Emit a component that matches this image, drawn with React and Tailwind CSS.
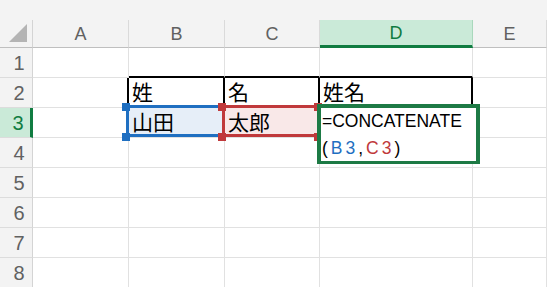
import React from 'react';

const fontStack = "font-['Liberation_Sans','Noto_Sans_CJK_JP',sans-serif]";

const COLS = ['A', 'B', 'C', 'D', 'E'];
const ROWS = [1, 2, 3, 4, 5, 6, 7, 8];

const colWidth = {
  A: 'w-[96px]',
  B: 'w-[96px]',
  C: 'w-[95px]',
  D: 'w-[153px]',
  E: 'flex-1',
};

const cellText = {
  B2: '姓',
  C2: '名',
  D2: '姓名',
  B3: '山田',
  C3: '太郎',
};

// bg + border for each cell; black table border around B2:D2 sits on the grid lines
const cellStyle = (id) => {
  switch (id) {
    case 'B1':
    case 'C1':
    case 'D1':
      return 'bg-white border-r border-r-[#e1e1e1] border-b-2 border-b-black';
    case 'A2':
      return 'bg-white border-r-2 border-r-black border-b border-b-[#e1e1e1]';
    case 'B2':
    case 'C2':
    case 'D2':
      return 'bg-white border-r-2 border-r-black border-b border-b-[#e1e1e1]';
    case 'B3':
      return 'bg-[#e6eef8] border-r border-b border-[#e1e1e1]';
    case 'C3':
      return 'bg-[#f9e8e8] border-r border-b border-[#e1e1e1]';
    default:
      return 'bg-white border-r border-b border-[#e1e1e1]';
  }
};

const Handle = ({ className }) => <span className={`absolute w-[8px] h-[8px] ${className}`} />;

const App = () => {
  return (
    <div className={`relative w-[547px] h-[287px] overflow-hidden bg-white ${fontStack}`}>
      <div className="h-[20px] bg-[#f3f3f3]" />

      {/* column headers */}
      <div className="flex h-[28px] bg-[#f3f3f3]">
        <div className="w-[33px] h-full border-r border-b border-r-[#d4d4d4] border-b-[#bfbfbf] flex items-end justify-end pr-[5px] pb-[5px]">
          <svg width="18" height="18" viewBox="0 0 18 18">
            <polygon points="0,18 18,18 18,0" fill="#b4b4b4" />
          </svg>
        </div>
        {COLS.map((c) => (
          <div
            key={c}
            className={`${colWidth[c]} h-full flex items-center justify-center text-[18px] leading-none ${
              c === 'D'
                ? 'bg-[#caead8] text-[#107c41] border-b-[3px] border-b-[#107c41] border-r border-r-[#a9d8bc]'
                : 'text-[#616161] border-b border-b-[#bfbfbf] border-r border-r-[#dadada]'
            }`}
          >
            {c}
          </div>
        ))}
      </div>

      {/* grid */}
      {ROWS.map((r) => (
        <div key={r} className="flex h-[30px]">
          <div
            className={`w-[33px] h-full flex items-center justify-center pl-[6px] text-[20px] leading-none border-b border-b-[#dcdcdc] ${
              r === 3
                ? 'bg-[#caead8] text-[#107c41] border-r-[3px] border-r-[#107c41]'
                : 'bg-[#f3f3f3] text-[#616161] border-r border-r-[#d4d4d4]'
            }`}
          >
            {r}
          </div>
          {COLS.map((c) => {
            const id = `${c}${r}`;
            return (
              <div
                key={c}
                className={`${colWidth[c]} ${cellStyle(id)} h-full flex items-center pl-[3px] pb-[1px] text-[21px] leading-none text-black whitespace-nowrap`}
              >
                {cellText[id] || ''}
              </div>
            );
          })}
        </div>
      ))}

      {/* B3 reference range */}
      <div className="absolute left-[126px] top-[105px] w-[99px] h-[32px] border-[3px] border-[#1f6fc1]">
        <Handle className="-left-[7px] -top-[5px] bg-[#1f6fc1]" />
        <Handle className="-left-[7px] -bottom-[7px] bg-[#1f6fc1]" />
      </div>

      {/* C3 reference range */}
      <div className="absolute left-[222px] top-[105px] w-[98px] h-[32px] border-[3px] border-[#c0393b]">
        <Handle className="-left-[7px] -top-[5px] bg-[#c0393b]" />
        <Handle className="-left-[7px] -bottom-[7px] bg-[#c0393b]" />
        <Handle className="-right-[5px] -top-[5px] bg-[#c0393b]" />
        <Handle className="-right-[5px] -bottom-[7px] bg-[#c0393b]" />
      </div>

      {/* D3 in edit mode */}
      <div className="absolute left-[317px] top-[104px] w-[163px] h-[60px] bg-white border-[4px] border-b-[3px] border-[#1d7a45] pl-[1px] text-[17.5px] leading-[27px] text-black whitespace-nowrap">
        <div>=CONCATENATE</div>
        <div className="tracking-[3px]">
          (<span className="text-[#1f6fc1]">B3</span>,<span className="text-[#c0393b]">C3</span>)
        </div>
      </div>
    </div>
  );
};

export default App;
